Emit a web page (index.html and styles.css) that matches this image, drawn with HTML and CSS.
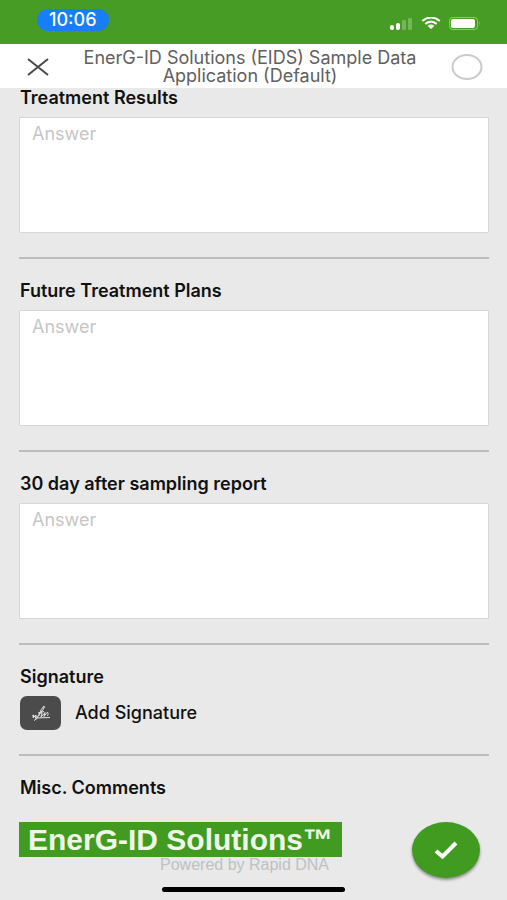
FILE: index.html
```html
<!DOCTYPE html>
<html lang="en">
<head>
  <meta charset="UTF-8">
  <meta name="viewport" content="width=device-width,initial-scale=1.0">
  <title>EnerG-ID Solutions (EIDS) Sample Data Application</title>
  <link rel="stylesheet" href="styles.css">
</head>
<body>

<div class="status-bar">
  <span class="clock">10:06</span>
  <div class="status-icons">
    <svg class="signal" viewBox="0 0 23 13" aria-hidden="true">
      <rect x="0" y="8" width="4" height="5" rx="2"/>
      <rect x="6" y="6" width="4" height="7" rx="2"/>
      <rect class="dim" x="12" y="3" width="4" height="10" rx="1"/>
      <rect class="dim" x="18" y="1" width="4" height="12" rx="1"/>
    </svg>
    <svg class="wifi" viewBox="0 0 20 12" aria-hidden="true">
      <path d="M1.2 4Q10-3 18.800 4M4.300 6.900Q10 2.300 15.700 6.900"/>
      <path class="dot" d="M6.600 9Q10 6.200 13.400 9L10 12Z"/>
    </svg>
    <svg class="battery" viewBox="0 0 32 13" aria-hidden="true">
      <rect class="shell" x="0.500" y="0.500" width="28" height="12" rx="3"/>
      <rect x="2" y="2" width="24" height="9" rx="2"/>
      <path class="dim" d="M30 4.500Q32 6.500 30 8.500Z"/>
    </svg>
  </div>
</div>

<header class="form-header">
  <button class="icon-btn" type="button" aria-label="Close">
    <svg class="close-icon" viewBox="0 0 22 18" aria-hidden="true"><path d="M1 1L21 17M21 1L1 17"/></svg>
  </button>
  <h1>EnerG-ID Solutions (EIDS) Sample Data Application (Default)</h1>
  <button class="icon-btn" type="button" aria-label="Progress">
    <svg class="ring-icon" viewBox="0 0 32 26" aria-hidden="true"><ellipse cx="16" cy="13" rx="14.500" ry="12"/></svg>
  </button>
</header>

<main class="form">
  <section class="field">
    <label for="results">Treatment Results</label>
    <textarea id="results" placeholder="Answer"></textarea>
  </section>
  <section class="field">
    <label for="plans">Future Treatment Plans</label>
    <textarea id="plans" placeholder="Answer"></textarea>
  </section>
  <section class="field">
    <label for="report">30 day after sampling report</label>
    <textarea id="report" placeholder="Answer"></textarea>
  </section>
  <section class="field">
    <h2>Signature</h2>
    <button class="add-signature" type="button">
      <span class="signature-tile">
        <svg viewBox="0 0 20 16" aria-hidden="true">
          <path d="M1 11L3 10L2 13L5 10L4.500 13L7 10.500M3 15.500Q6 15 8 9.500T13 1Q14.500 1 12 4.500T7.500 11M7 8L13 6.500M11 7.500L10 12L14 7.500L13 11.500L16 7.500Q18 7 16.500 11M4 13L19 12.500"/>
        </svg>
      </span>
      Add Signature
    </button>
  </section>
  <section class="field">
    <h2>Misc. Comments</h2>
  </section>
</main>

<footer class="form-footer">
  <div class="brand">
    <div class="brand-name">EnerG-ID Solutions™</div>
    <div class="brand-tag">Powered by Rapid DNA</div>
  </div>
  <button class="submit-btn" type="button" aria-label="Submit">
    <svg viewBox="0 0 24 18" aria-hidden="true"><path d="M2 10L8.500 15.500L22 2"/></svg>
  </button>
</footer>
<div class="home-indicator"></div>

</body>
</html>
```
FILE: styles.css
```css
* { box-sizing: border-box; }
body {
  font-family: Inter, "Liberation Sans", sans-serif;
  font-size: 18px;
  line-height: 20px;
  background: #e9e9e9;
  color: #111;
  margin: 0;
  min-height: 100vh;
  display: flex; flex-direction: column;
}
button {
  font: inherit; color: inherit;
  background: none; border: none;
  padding: 0; cursor: pointer;
}
svg { display: block; fill: none; }

/* Phone status bar */
.status-bar {
  height: 44px;
  padding: 0 26px 4px 37px;
  display: flex; justify-content: space-between;
  align-items: center;
  background: #479c25;
}
.clock {
  padding: 1px 12px;
  border-radius: 12px;
  background: #177ef8; color: #fff;
  font-weight: 500;
}
.status-icons {
  display: flex; align-items: center; gap: 8px;
  padding-top: 6px;
}
.status-icons svg { fill: #fff; }
.status-icons .dim { opacity: 0.25; }
.signal { width: 23px; height: 13px; }
.wifi { width: 20px; height: 12px; }
.wifi path { fill: none; stroke: #fff; stroke-width: 2; }
.wifi .dot { fill: #fff; stroke: none; }
.battery { width: 32px; height: 13px; }
.battery .shell { fill: none; stroke: #fff; opacity: 0.4; }

/* Title bar */
.form-header {
  min-height: 44px;
  padding: 2px 24px 0 27px;
  display: flex; justify-content: space-between;
  align-items: center;
  background: #fff;
}
.form-header h1 {
  flex: 1;
  max-width: 352px;
  margin: 0;
  font-size: 18px; font-weight: 400; line-height: 18px;
  text-align: center; color: #606060;
}
.close-icon { width: 22px; height: 18px; stroke: #4a4a4a; stroke-width: 2; }
.ring-icon { width: 32px; height: 26px; stroke: #c9cacb; stroke-width: 2; }

/* Form */
.form { padding: 0 18px 0 19px; }
.field {
  display: flex; flex-direction: column; gap: 9px;
  padding: 22px 0 24px;
  border-bottom: 2px solid #bdbdbd;
}
.field:first-child { padding-top: 0; }
.field:last-child { border-bottom: none; }
.field label, .field h2 {
  margin: 0; padding-left: 1px;
  font-size: 18px; font-weight: 600;
}
.field textarea {
  width: 100%; height: 116px;
  padding: 6px 12px;
  font: inherit;
  background: #fff;
  border: 1px solid #d6d6d6; border-radius: 1px;
  resize: none;
}
.field textarea::placeholder { color: #c6c6c6; }
.add-signature {
  align-self: flex-start;
  display: flex; align-items: center; gap: 14px;
  padding-left: 1px;
  font-weight: 500;
}
.signature-tile {
  width: 41px; height: 34px;
  display: flex; justify-content: center; align-items: center;
  background: #4b4b4b; border-radius: 7px;
}
.signature-tile svg { width: 20px; height: 16px; stroke: #e4e4e4; stroke-width: 1; }

/* Brand strip and submit */
.form-footer {
  display: flex; justify-content: space-between; align-items: flex-start;
  padding: 0 27px 0 19px;
}
.brand-name {
  padding: 0 9px;
  background: #419b20; color: #eef6e8;
  font-family: "Liberation Sans", Arial, sans-serif;
  font-size: 30px; font-weight: 700; line-height: 35px;
}
.brand-tag {
  padding-right: 13px;
  font-family: "Liberation Sans", Arial, sans-serif;
  font-size: 16px; line-height: 16px;
  text-align: right; color: #c0c0c0;
}
.submit-btn {
  width: 68px; height: 56px;
  display: flex; justify-content: center; align-items: center;
  background: #419b20; border-radius: 50%;
  box-shadow: 0 2px 3px rgba(0,0,0,0.4);
}
.submit-btn svg { width: 24px; height: 18px; stroke: #fff; stroke-width: 4; }
.home-indicator {
  width: 36%; height: 5px;
  margin: auto auto 8px;
  background: #000; border-radius: 3px;
}
```
